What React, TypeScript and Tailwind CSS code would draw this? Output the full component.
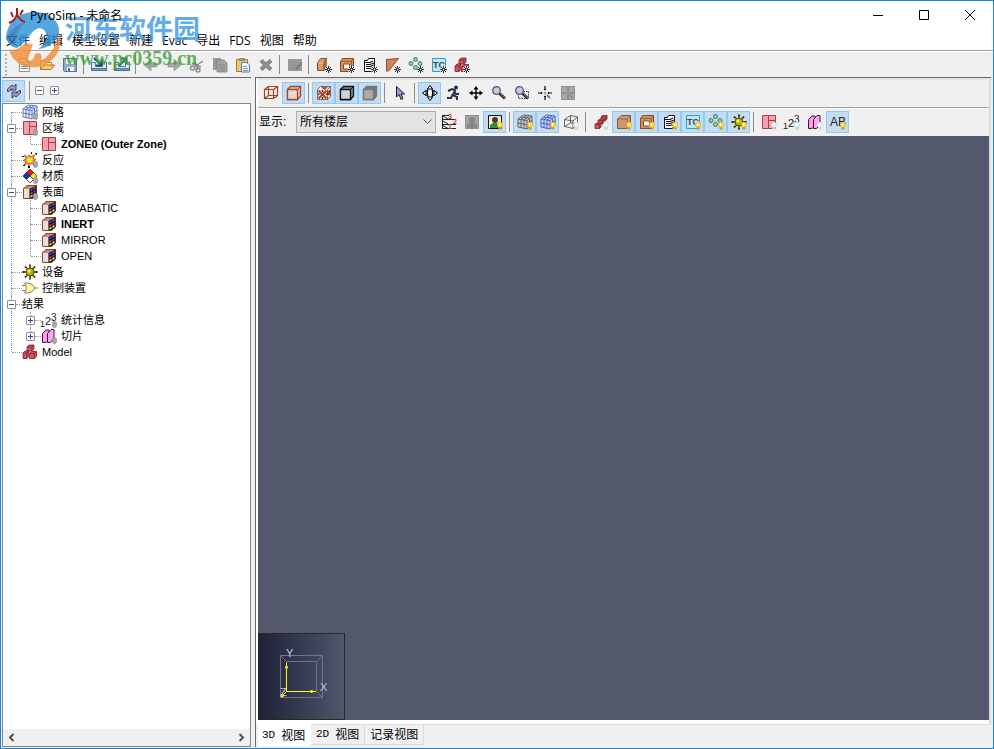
import React from "react";

type Overlay = "new" | "on" | "off" | "dim";

function Mark({ kind }: { kind: Overlay }) {
  if (kind === "new")
    return (
      <g>
        <circle cx="12.500" cy="12.500" r="3.500" fill="#f4f4f4" />
        <path
          d="M12.500 9v7M9 12.500h7M10 10l5 5M15 10l-5 5"
          stroke="#111"
          strokeWidth="0.900"
        />
        <rect x="11.800" y="11.800" width="1.400" height="1.400" fill="#fff" />
      </g>
    );
  if (kind === "dim")
    return <rect x="11.500" y="9.500" width="4" height="6" rx="1.800" fill="#a8a8a8" stroke="#8c8c8c" strokeWidth="0.700" />;
  const fill = kind === "on" ? "#ffd83a" : "#e6f5fd";
  const line = kind === "on" ? "#e0a52a" : "#a9cfe0";
  return (
    <g>
      <path d="M11.500 12h3v3.500h-3z" fill={kind === "on" ? "#c99b2e" : "#bcd8e6"} />
      <circle cx="13" cy="10.800" r="2.700" fill={fill} stroke={line} strokeWidth="0.500" />
      <path d="M12 9.500h1.200v2H12z" fill="#fff" />
    </g>
  );
}

function Ic({ children, mark, crisp }: { children?: React.ReactNode; mark?: Overlay; crisp?: boolean }) {
  return (
    <svg
      width="16"
      height="16"
      viewBox="0 0 16 16"
      fill="none"
      aria-hidden="true"
      className="block shrink-0 overflow-visible"
      shapeRendering={crisp ? "crispEdges" : "auto"}
    >
      {children}
      {mark && <Mark kind={mark} />}
    </svg>
  );
}

const FileIcon = () => (
  <Ic>
    <path d="M3.500 1.500h7l3 3v10h-10z" fill="#fffef8" stroke="#a08c5a" />
    <path d="M10.500 1.500v3h3" stroke="#a08c5a" />
    <path d="M5 5.500h4M5 7.500h7M5 9.500h7M5 11.500h7" stroke="#5b84b5" />
  </Ic>
);
const FolderIcon = () => (
  <Ic>
    <path d="M1.500 12.500v-9h4l1 2h6v3" fill="#fdf3cf" stroke="#b0802e" />
    <path d="M1.500 12.500l3-4.500h11l-3.500 4.500z" fill="#f7c86c" stroke="#b0741e" />
  </Ic>
);
const SaveIcon = () => (
  <Ic>
    <path d="M1.500 1.500h13v13h-12l-1-1z" fill="#8fa9cb" stroke="#587196" />
    <path d="M4 2h8v5H4z" fill="#e7f1e5" />
    <path d="M5 10h7v4H5z" fill="#f6f6f6" />
    <path d="M6 11h2v3H6z" fill="#587196" />
  </Ic>
);
const TrayIcon = ({ out }: { out?: boolean }) => (
  <Ic>
    <path d="M0.500 5.500h4v4h7v-4h4v8h-15z" fill="#dce8f4" stroke="#4d7394" />
    <path d="M0.500 11.500h15v2h-15z" fill="#7f9fba" stroke="#4d7394" />
    {out ? (
      <path d="M5 9l7-7M7 1.500h5.500V7" stroke="#2b7568" strokeWidth="2" />
    ) : (
      <path d="M3 1l7 7M10.500 2.500v6H5" stroke="#244d7d" strokeWidth="2" />
    )}
  </Ic>
);
const ArrowIcon = ({ right }: { right?: boolean }) => (
  <Ic>
    {right ? (
      <path d="M2 6h6V2l7 6-7 6v-4H2z" fill="#a6a6a6" stroke="#8e8e8e" strokeWidth="0.600" />
    ) : (
      <path d="M14 6H8V2L1 8l7 6v-4h6z" fill="#a6a6a6" stroke="#8e8e8e" strokeWidth="0.600" />
    )}
  </Ic>
);
const CutIcon = () => (
  <Ic>
    <path d="M5 10L14 4M6 5l3 8M3 6l9 4" stroke="#8b8b8b" strokeWidth="1.500" />
    <circle cx="3.500" cy="11" r="2" stroke="#8b8b8b" strokeWidth="1.500" />
    <circle cx="9" cy="13" r="2" stroke="#8b8b8b" strokeWidth="1.500" />
  </Ic>
);
const CopyIcon = () => (
  <Ic>
    <path d="M1 1h8v12H1z" fill="#999" />
    <path d="M5 3h7l3 3v9H5z" fill="#a2a2a2" stroke="#7f7f7f" strokeWidth="0.800" />
    <path d="M7 7.500h6M7 9.500h6M7 11.500h6M7 13.500h6M2 4.500h2M2 6.500h2M2 8.500h2" stroke="#858585" strokeWidth="0.600" />
  </Ic>
);
const PasteIcon = () => (
  <Ic>
    <path d="M1.500 2.500h11v12h-11z" fill="#efc66d" stroke="#a97b2c" />
    <path d="M4 1h6v3H4z" fill="#8f8f8f" />
    <path d="M6.500 5.500h5l3 2.500v7h-8z" fill="#f3f8ff" stroke="#5b79a8" />
    <path d="M8 9.500h4M8 11.500h5M8 13.500h5" stroke="#5b79a8" strokeWidth="0.800" />
  </Ic>
);
const DeleteIcon = () => (
  <Ic>
    <path d="M3 3.500l10 9M13 3.500l-10 9" stroke="#7e7e7e" strokeWidth="4" />
    <path d="M3.500 4l9 8M12.500 4l-9 8" stroke="#929292" strokeWidth="2" />
  </Ic>
);
const TableIcon = () => (
  <Ic>
    <path d="M1 2h14v12H1z" fill="#9b9b9b" />
    <path d="M1 5.500h14M1 8.500h14M1 11.500h14M5.500 3v11" stroke="#8d8d8d" strokeWidth="0.700" />
    <path d="M14.500 6l-6 7" stroke="#777" strokeWidth="1.600" />
  </Ic>
);

const Slab = () => (
  <g>
    <path d="M1.500 6l3-4.500h6l-2.500 4v8H1.500z" fill="#dc9a6c" stroke="#8a4a22" />
    <path d="M10.500 1.500v9L8 13.500V5.500z" fill="#b06a3c" stroke="#8a4a22" strokeWidth="0.500" />
    <path d="M2.500 6h5" stroke="#f0bd97" />
  </g>
);
const Hole = () => (
  <g>
    <path d="M1.500 4.500l2-3h11v10l-2 3h-11z" fill="#d4905f" stroke="#8a4a22" />
    <path d="M1.500 4.500h11v10M12.500 4.500l2-3" stroke="#8a4a22" strokeWidth="0.700" />
    <path d="M4.500 7h6v5h-6z" fill="#fff" stroke="#8a4a22" />
  </g>
);
const Vent = () => (
  <g>
    <path d="M2.500 3.500h3l1-2h6v10l-2 3h-8z" fill="#fff" stroke="#111" />
    <path d="M3 5.500h5l3-1.500M4 7.500h4l4-1.500M4 9.500h4l4-1.500M4 11.500h4l4-1.500" stroke="#111" strokeWidth="1.100" />
  </g>
);
const Particles = () => (
  <g fill="#9ccca7" stroke="#3c7f5a">
    <circle cx="7.500" cy="2.500" r="2" />
    <circle cx="3" cy="6.500" r="2" />
    <circle cx="7.500" cy="10.500" r="2" />
    <circle cx="12" cy="6.500" r="2" />
  </g>
);
const Thermo = () => (
  <g>
    <path d="M1.500 1.500h13v13h-13z" fill="#bfe5f7" stroke="#2aa0cf" />
    <text x="2" y="11" fontSize="9" fontWeight="bold" fill="#444" className="font-['Liberation_Sans',sans-serif]">TC</text>
  </g>
);
const Blocks = ({ small }: { small?: boolean }) =>
  small ? (
    <g fill="#c9555c" stroke="#861c26" strokeWidth="0.800" strokeLinejoin="round">
      <path d="M8 3l1.500-1.500H14V5l-1.500 1.500H8zM8 3h4.500v3.500M12.500 3L14 1.500" />
      <path d="M5 6.500L6.500 5H11v3.500L9.500 10H5zM5 6.500h4.500V10M9.500 6.500L11 5" />
      <path d="M2 10.500L3.500 9H8v4l-1.500 1.500H2zM2 10.500h4.500v4M6.500 10.500L8 9" />
    </g>
  ) : (
    <g fill="#cb5a62" stroke="#861c26" strokeWidth="0.800" strokeLinejoin="round">
      <path d="M5 3l2-2h5v4l-2 2H5zM5 3h5v4M10 3l2-2" />
      <path d="M1 9l2-2h4v5l-2 2.500H1zM1 9h4v5.500M5 9l2-2" />
      <path d="M7.500 9.500l2-2h5v5l-2 2h-5zM7.500 9.500h5v5M12.500 9.500l2-2" />
    </g>
  );
const Sun = () => (
  <g>
    <path
      d="M8 0.500v15M0.500 8h15M3 2.500l10 11M13 2.500L3 13.500"
      stroke="#2c2b00"
      strokeWidth="1.800"
    />
    <path d="M8 2v12M2 8h12M4 4l8 8M12 4l-8 8" stroke="#b4b01c" strokeWidth="0.800" />
    <circle cx="8" cy="8" r="4" fill="#b2af14" stroke="#3b3900" strokeWidth="0.800" />
    <circle cx="7" cy="7" r="1.800" fill="#eeeb5a" />
  </g>
);
const GridCube = ({ color = "#5468b8", fill = "#eef2fd" }: { color?: string; fill?: string }) => (
  <g stroke={color} strokeWidth="0.900">
    <path d="M1 5l5.500-4 8.500 1v8.500l-5 4.500-9-2z" fill={fill} />
    <path d="M1 5l9 1.500L15 2M10 6.500V15M1 9l9 1.700 5-4.500M4 5.500v8.200M7 6v8.500M3.700 3l9 1.200M4 5.500L9.500 1.400M7 6l5-4.300M12.500 4.500v8.300" />
  </g>
);
const Zone = ({ mark }: { mark?: Overlay }) => (
  <Ic mark={mark}>
    <path d="M1.500 1.500h13v13h-13z" fill="#f99fa8" stroke="#a5404c" />
    <path d="M7.500 1.500v13M7.500 6.500h7" stroke="#a5404c" />
  </Ic>
);
const Nums = ({ mark }: { mark?: Overlay }) => (
  <Ic mark={mark}>
    <g fill="#222" className="font-['Liberation_Sans',sans-serif]">
      <text x="-1" y="15" fontSize="9">1</text>
      <text x="4" y="13" fontSize="11">2</text>
      <text x="10" y="9" fontSize="10">3</text>
    </g>
  </Ic>
);
const Slice = ({ mark }: { mark?: Overlay }) => (
  <Ic mark={mark}>
    <path d="M1.500 5.500L5 2h3v9l-3 3.500H1.500z" fill="#f5a0e8" stroke="#4c103f" />
    <path d="M6.500 5.500L10 1.500h3v9l-3.500 4h-3z" fill="#f8a8ed" stroke="#4c103f" />
  </Ic>
);
const WireCube = () => (
  <Ic>
    <path d="M1.500 4.500h9v9h-9zM5.500 1.500h9v9h-9zM1.500 4.500l4-3M10.500 4.500l4-3M1.500 13.500l4-3M10.500 13.500l4-3" stroke="#a8401f" strokeWidth="1.200" />
  </Ic>
);
const SolidCube = ({ line, face, top }: { line: string; face: string; top: string }) => (
  <Ic>
    <path d="M1.500 4.500l3-3h10v9.500l-3 3.500h-10z" fill={top} stroke={line} strokeWidth="1.300" />
    <path d="M1.500 4.500h10v10h-10z" fill={face} stroke={line} strokeWidth="1.300" />
    <path d="M11.500 4.500l3-3" stroke={line} />
  </Ic>
);
const TexCube = () => (
  <Ic>
    <path d="M1.500 4.500l3-3h10v9.500l-3 3.500h-10z" fill="#f3ebe8" stroke="#5a3a30" strokeWidth="0.700" />
    <path d="M2.500 5.500l8 8M10.500 5.500l-8 8M6 2l3 2M11 2L8 4M12 6l2 4M14 5l-2 5" stroke="#b43b22" strokeWidth="1.900" />
    <path d="M1.500 9h2M9.500 9h2M6.500 5v2M6.500 12v2" stroke="#333" strokeWidth="1.500" />
    <path d="M11.500 4.500v10M11.500 4.500l3-3" stroke="#4a2a20" strokeWidth="0.700" />
  </Ic>
);
const Cursor = () => (
  <Ic>
    <path d="M4.500 1.500v10.500l2.500-2.500 2 5 2-1-2-4.500h3.500z" fill="#97a0ce" stroke="#16162e" />
  </Ic>
);
const Orbit = () => (
  <Ic>
    <ellipse cx="8" cy="8" rx="6" ry="2.500" stroke="#000" strokeWidth="1.200" />
    <ellipse cx="8" cy="8" rx="2.500" ry="6" fill="#fff" stroke="#000" strokeWidth="1.200" />
    <path d="M5.500 4L8 0.500 10.500 4zM5.500 12L8 15.500l2.500-3.500zM4 5.500L0.500 8 4 10.500zM12 5.500L15.500 8 12 10.500z" fill="#fff" stroke="#000" />
    <path d="M6 7h4v2H6z" fill="#fff" />
  </Ic>
);
const Runner = () => (
  <Ic>
    <circle cx="11" cy="2.500" r="2" fill="#26324a" />
    <path d="M3 6l4-2 3 1-2 5 4 2v3M8 9l-2 4H2M9 6l2 3h3" stroke="#26324a" strokeWidth="2" />
  </Ic>
);
const Move = () => (
  <Ic>
    <path d="M8 3v10M3 8h10" stroke="#000" strokeWidth="1.400" />
    <path d="M8 1l2.500 3.500h-5zM8 15l2.500-3.500h-5zM1 8l3.500-2.500v5zM15 8l-3.500-2.500v5z" fill="#000" />
  </Ic>
);
const Lens = ({ box }: { box?: boolean }) => (
  <Ic>
    {box && <path d="M4.500 6.500h10v7h-10z" stroke="#1e3184" strokeDasharray="1.500 1" />}
    <path d="M8.500 8.500l5.500 5" stroke="#2a2030" strokeWidth="3" />
    <path d="M9.500 9l4.500 4" stroke="#bd7b66" strokeWidth="1" />
    <circle cx="5.500" cy="5.500" r="3.800" fill="#c7cbea" stroke="#55566c" strokeWidth="1.300" />
  </Ic>
);
const Center = () => (
  <Ic>
    <path d="M8 1v4M8 11v4M1 8h4M11 8h4" stroke="#000" strokeWidth="1.200" />
    <path d="M8 5.500L6.500 4h3zM8 10.500L6.500 12h3zM5.500 8L4 6.500v3zM10.500 8L12 6.500v3z" fill="#111" />
    <circle cx="8" cy="8" r="1.500" fill="#9aa5dd" />
    <path d="M10 10l3 3" stroke="#8c4a3a" strokeWidth="1.500" />
  </Ic>
);
const GrayCenter = () => (
  <Ic>
    <path d="M1.500 1.500h13v13h-13z" fill="#a8a8a8" stroke="#8f8f8f" />
    <path d="M8 2v4M8 10v4M2 8h4M10 8h4M10 10l3 3" stroke="#777" strokeWidth="1.200" />
    <circle cx="8" cy="8" r="1.500" fill="#888" />
  </Ic>
);
const Floors = () => (
  <Ic>
    <path d="M1.500 1v14M1 5.500h14M1 10.500h14M1 14.500h14M2 2l5 3M2 7l5 3M2 11.500l5 3M2 1.500h6" stroke="#222" />
    <g fill="#d0361e" fontSize="7" fontWeight="bold" className="font-['Liberation_Sans',sans-serif]">
      <text x="7" y="5">3</text>
      <text x="12" y="10">2</text>
      <text x="7" y="15">1</text>
    </g>
  </Ic>
);
const Person = ({ gray }: { gray?: boolean }) => (
  <Ic mark={gray ? undefined : "on"}>
    <path d="M1.500 1.500h13v13h-13z" fill={gray ? "#a5a5a5" : "#fff6be"} stroke={gray ? "#8f8f8f" : "#111"} />
    {!gray && <path d="M2 2h12v3H2z" fill="#c9edf6" />}
    <path d="M3 14v-3l3-2h4l3 2v3z" fill={gray ? "#858585" : "#2d8f3e"} />
    <circle cx="8" cy="6" r="3" fill={gray ? "#858585" : "#5c3526"} />
  </Ic>
);
const Refresh = () => (
  <Ic>
    <path d="M1.500 8.500V6L6 2l2 1.500L10 1v6H4.500L6 5.500 3 8.500z" fill="#9da0cc" stroke="#24253c" strokeWidth="0.800" />
    <path d="M14.500 7.500V10L10 14l-2-1.500L6 15V9h5.500L10 10.500l3-3z" fill="#9da0cc" stroke="#24253c" strokeWidth="0.800" />
  </Ic>
);
const Burst = () => (
  <Ic mark="dim">
    <path d="M2.500 3l3 2.500L7 3l1.500 2 4-2-1.500 3.500 3 1-3 2 2 4-4-2-2 2.500-1-3-4 2.500 2-4-3-1 3-1.500z" fill="#f6b52e" stroke="#b0330f" strokeWidth="0.800" />
    <path d="M5.500 6l4 4M10 6l-4 4" stroke="#fff06a" strokeWidth="1.300" />
    <path d="M0 4h2v1H0zM2 1l2 2M13 1h2v2h-1zM9 0h1v2H9zM1 13h2v1H1zM6 14h2v2H6z" fill="#111" />
  </Ic>
);
const Diamond = () => (
  <Ic mark="dim">
    <path d="M8 1l3.500 3.500L8 8 4.500 4.500z" fill="#ea1b1b" />
    <path d="M4.500 4.500L8 8l-3.500 3.500L1 8z" fill="#1a2fd0" />
    <path d="M11.500 4.500L15 8l-3.500 3.500L8 8z" fill="#f6e52b" />
    <path d="M8 8l3.500 3.500L8 15l-3.500-3.500z" fill="#fff" />
    <path d="M8 1l7 7-7 7-7-7zM4.500 4.500l7 7M11.500 4.500l-7 7" stroke="#111" strokeWidth="0.700" />
  </Ic>
);
const Surface = ({ mark }: { mark?: Overlay }) => (
  <Ic mark={mark}>
    <path d="M1.500 4.500L5 1.500h9.500v9.500l-4 3.500h-9z" fill="#c98a6c" stroke="#7a3a20" strokeWidth="0.900" />
    <path d="M2 5h5.500v9H2z" fill="#e2e0df" />
    <path d="M7.500 5L14.500 1.500v9.500l-4 3.500h-3z" fill="#16162a" />
    <path d="M8.500 5.500l2-1v2l-2 1zM11.500 7l2-1v2l-2 1z" fill="#2b4be0" />
    <path d="M11.500 3.800l2-1v2l-2 1zM8.500 8.700l2-1v2l-2 1z" fill="#e0392c" />
    <path d="M8.500 11.800l2-1v2l-2 1zM11.500 10l2-1v2l-2 1z" fill="#f5dc30" />
  </Ic>
);
const Gate = () => (
  <Ic>
    <path d="M0 5.500h4M0 10.500h4M13 8h3" stroke="#777" />
    <path d="M2.500 3h4q5 1 6.500 5-1.500 4-6.500 5h-4q3.500-5 0-10z" fill="#fdf6a2" stroke="#8c8645" />
  </Ic>
);

function Tool({ label, on, children }: { label: string; on?: boolean; children: React.ReactNode }) {
  return (
    <button
      type="button"
      title={label}
      aria-label={label}
      className={
        "flex h-[22px] w-[23px] shrink-0 items-center justify-center border " +
        (on ? "border-[#90c8f6] bg-[#c3dcf1]" : "border-transparent hover:bg-[#dcebf8]")
      }
    >
      {children}
    </button>
  );
}
const Sep = () => <span className="mx-[3px] h-5 w-px shrink-0 bg-[#8c8c8c]" />;
const MainSep = () => <span className="ml-[2px] mr-[3px] h-[19px] w-px shrink-0 bg-[#8c8c8c]" />;

function Expander({ open }: { open: boolean }) {
  return (
    <button
      type="button"
      aria-label={open ? "折叠" : "展开"}
      className="flex h-[9px] w-[9px] shrink-0 items-center justify-center rounded-[1px] border border-[#919191] bg-white"
    >
      <svg width="5" height="5" viewBox="0 0 5 5" shapeRendering="crispEdges" aria-hidden="true">
        <path d={open ? "M0 2h5v1H0z" : "M0 2h5v1H0zM2 0h1v5H2z"} fill="#304c9c" />
      </svg>
    </button>
  );
}

type Node = {
  name: string;
  icon?: React.ReactNode;
  bold?: boolean;
  open?: boolean;
  children?: Node[];
};

const TREE: Node[] = [
  { name: "网格", icon: <Ic mark="dim"><GridCube /></Ic> },
  { name: "区域", icon: <Zone mark="dim" />, open: true, children: [{ name: "ZONE0 (Outer Zone)", icon: <Zone />, bold: true }] },
  { name: "反应", icon: <Burst /> },
  { name: "材质", icon: <Diamond /> },
  {
    name: "表面",
    icon: <Surface mark="dim" />,
    open: true,
    children: [
      { name: "ADIABATIC", icon: <Surface /> },
      { name: "INERT", icon: <Surface />, bold: true },
      { name: "MIRROR", icon: <Surface /> },
      { name: "OPEN", icon: <Surface /> },
    ],
  },
  { name: "设备", icon: <Ic><Sun /></Ic> },
  { name: "控制装置", icon: <Gate /> },
  {
    name: "结果",
    open: true,
    children: [
      { name: "统计信息", icon: <Nums mark="dim" />, open: false },
      { name: "切片", icon: <Slice mark="dim" />, open: false },
    ],
  },
  { name: "Model", icon: <Ic><Blocks /></Ic> },
];

function Branch({ nodes, root }: { nodes: Node[]; root?: boolean }) {
  return (
    <ul>
      {nodes.map((n, i) => {
        const last = i === nodes.length - 1;
        const first = root && i === 0;
        return (
          <li key={n.name} className="grid grid-cols-[15px_1fr]">
            <div className="flex h-4 items-center">
              <span className="flex w-[9px] flex-col items-center self-stretch">
                <span className={"w-0 flex-1 border-l border-dotted " + (first ? "border-transparent" : "border-[#999]")} />
                {n.open !== undefined && <Expander open={n.open} />}
                <span className={"w-0 flex-1 border-l border-dotted " + (last ? "border-transparent" : "border-[#999]")} />
              </span>
              <span className={"h-0 flex-1 border-t border-dotted border-[#999] " + (n.open === undefined ? "-ml-1" : "")} />
            </div>
            <div className="flex h-4 items-center gap-1 whitespace-nowrap">
              {n.icon}
              <span className={n.bold ? "font-bold" : ""}>{n.name}</span>
            </div>
            {n.children && (
              <>
                <div className="flex w-[9px] justify-center">
                  <span className={"w-0 border-l border-dotted " + (last ? "border-transparent" : "border-[#999]")} />
                </div>
                <div className="pl-1">
                  <Branch nodes={n.children} />
                </div>
              </>
            )}
          </li>
        );
      })}
    </ul>
  );
}

function Watermark() {
  return (
    <div className="pointer-events-none absolute left-1 top-2 flex items-start opacity-80">
      <svg width="60" height="60" viewBox="0 0 60 60" aria-hidden="true">
        <path d="M1 28C3 12 14 3 30 3c13 0 22 7 24 16 1 11-8 20-21 21 6-4 10-10 8-16-2-5-7-6-11-3-6 4-9 13-18 18-6-1-10-5-11-11z" fill="#2991d8" />
        <path d="M1 30c3-8 10-14 19-17-6 6-8 12-9 21-4 1-8-1-10-4z" fill="#2070b0" />
        <path d="M4 40c6 2 11-1 16-6l8 1-6 18c5-1 7-3 8-8 5-2 8 0 6 7 8-5 14-13 16-22 3-2 3-4 3-6 3 16-6 31-22 34C17 60 7 52 4 40z" fill="#f38b35" />
      </svg>
      <div className="flex flex-col pt-[7px]">
        <span className="text-[27px] font-bold leading-7 text-[#3b9be9]">河东软件园</span>
        <span className="font-['Liberation_Serif',serif] text-[20px] font-bold leading-7 text-[#3da13b]">www.pc0359.cn</span>
      </div>
    </div>
  );
}

const MENU = ["文件", "编辑", "模型设置", "新建", "Evac", "导出", "FDS", "视图", "帮助"];

export default function App() {
  return (
    <div className="relative flex h-screen flex-col overflow-hidden border border-[#1883d7] bg-[#f0f0f0] font-['Liberation_Sans','Noto_Sans_CJK_SC',sans-serif] text-xs text-black">
      <header className="flex h-[29px] shrink-0 items-center justify-between bg-white pl-[7px] font-['Noto_Sans','Noto_Sans_CJK_SC',sans-serif]">
        <div className="z-10 flex items-center gap-1">
          <svg width="18" height="16" viewBox="0 0 18 16" fill="none" stroke="#a51d20" strokeWidth="2" aria-hidden="true">
            <path d="M9 0v6q-1 6-8 9M9 6q2 6 8 8M3 4l2 5M15 2l-3 5" />
          </svg>
          <h1 className="text-xs">PyroSim - 未命名</h1>
        </div>
        <div className="flex self-start">
          {["M3 8.500h10", "M3.500 3.500h9v9h-9z", "M3 3l10 10M13 3L3 13"].map((d, i) => (
            <button key={d} type="button" aria-label={["最小化", "最大化", "关闭"][i]} className="flex h-[27px] w-[46px] items-center justify-center">
              <svg width="16" height="16" viewBox="0 0 16 16" fill="none" stroke="#000" aria-hidden="true"><path d={d} /></svg>
            </button>
          ))}
        </div>
      </header>
      <nav className="flex h-[21px] shrink-0 items-center gap-[9px] border-b border-[#a0a0a0] bg-white pl-[5px] pt-[2px] font-['Open_Sans','Noto_Sans_CJK_SC',sans-serif]">
        {MENU.map((m) => (
          <button key={m} type="button" className="whitespace-nowrap">{m}</button>
        ))}
      </nav>

      <div className="flex h-[26px] shrink-0 items-center border-t border-white pl-1">
        <span className="mr-[5px] h-[22px] w-0 border-l-2 border-dotted border-[#b4b4b4]" />
        <Tool label="新建"><FileIcon /></Tool>
        <Tool label="打开"><FolderIcon /></Tool>
        <Tool label="保存"><SaveIcon /></Tool>
        <MainSep />
        <Tool label="导入"><TrayIcon /></Tool>
        <Tool label="导出"><TrayIcon out /></Tool>
        <MainSep />
        <Tool label="撤销"><ArrowIcon /></Tool>
        <Tool label="重做"><ArrowIcon right /></Tool>
        <Tool label="剪切"><CutIcon /></Tool>
        <Tool label="复制"><CopyIcon /></Tool>
        <Tool label="粘贴"><PasteIcon /></Tool>
        <Tool label="删除"><DeleteIcon /></Tool>
        <MainSep />
        <Tool label="编辑"><TableIcon /></Tool>
        <MainSep />
        <Tool label="新建障碍物"><Ic mark="new"><Slab /></Ic></Tool>
        <Tool label="新建孔洞"><Ic mark="new"><Hole /></Ic></Tool>
        <Tool label="新建通风口"><Ic mark="new"><Vent /></Ic></Tool>
        <Tool label="新建斜面"><Ic mark="new"><path d="M1.500 2.500l12-1-10 12.500h-2z" fill="#cf8453" stroke="#8a4a22" /></Ic></Tool>
        <Tool label="新建粒子"><Ic mark="new"><Particles /></Ic></Tool>
        <Tool label="新建热电偶"><Ic mark="new"><Thermo /></Ic></Tool>
        <Tool label="新建组"><Ic mark="new"><Blocks /></Ic></Tool>
      </div>

      <div className="flex min-h-0 flex-1 gap-1 pb-px pl-px pr-[2px]">
        <aside className="flex w-[249px] shrink-0 flex-col border-t border-[#696969]">
          <div className="flex h-[25px] shrink-0 items-center">
            <Tool label="同步选择" on><Refresh /></Tool>
            <span className="ml-1 mr-[5px] h-[19px] w-px bg-[#8c8c8c]" />
            <div className="flex gap-[6px]">
              <Expander open />
              <Expander open={false} />
            </div>
          </div>
          <div className="flex min-h-0 flex-1 flex-col border border-[#828790] bg-white">
            <div className="min-h-0 flex-1 overflow-hidden pl-1 text-[11px] leading-4">
              <Branch nodes={TREE} root />
            </div>
            <div className="flex h-[17px] shrink-0 items-center justify-between bg-[#f0f0f0] px-[5px]">
              {["M5.500 1L2 4.500 5.500 8", "M1.500 1L5 4.500 1.500 8"].map((d, i) => (
                <button key={d} type="button" aria-label={i ? "向右滚动" : "向左滚动"}>
                  <svg width="7" height="9" viewBox="0 0 7 9" fill="none" stroke="#505050" strokeWidth="2" aria-hidden="true"><path d={d} /></svg>
                </button>
              ))}
            </div>
          </div>
        </aside>

        <main className="flex min-w-0 flex-1 flex-col border-l border-t border-[#696969]">
          <div className="flex min-h-0 flex-1 flex-col border-2 border-b border-[#dcdcdc] border-l-white border-t-[#e3e3e3]">
            <div className="flex h-7 shrink-0 items-center border-b border-[#a0a0a0] pb-px pl-px">
              <Tool label="线框"><WireCube /></Tool>
              <Tool label="轮廓" on><SolidCube line="#a8472a" face="#e9d6d0" top="#d9c5bf" /></Tool>
              <Sep />
              <Tool label="纹理" on><TexCube /></Tool>
              <Tool label="实体轮廓" on><SolidCube line="#111" face="#cdd3d8" top="#888" /></Tool>
              <Tool label="实体" on><SolidCube line="#777" face="#aaa" top="#777" /></Tool>
              <Sep />
              <Tool label="选择"><Cursor /></Tool>
              <Sep />
              <Tool label="旋转" on><Orbit /></Tool>
              <Tool label="漫游"><Runner /></Tool>
              <Tool label="平移"><Move /></Tool>
              <Tool label="缩放"><Lens /></Tool>
              <Tool label="框选缩放"><Lens box /></Tool>
              <Tool label="重置视图"><Center /></Tool>
              <Tool label="重置所选"><GrayCenter /></Tool>
            </div>
            <div className="flex h-7 shrink-0 items-center border-t border-white pb-px pl-px">
              <label htmlFor="floor" className="w-[37px] shrink-0 whitespace-nowrap">显示:</label>
              <div className="relative mr-px w-[140px] shrink-0">
                <select id="floor" className="block h-[22px] w-full appearance-none border border-[#adadad] bg-[#e3e3e3] pl-[3px] text-xs outline-none">
                  <option>所有楼层</option>
                </select>
                <svg className="pointer-events-none absolute right-1 top-[8px]" width="9" height="6" viewBox="0 0 9 6" fill="none" stroke="#555" aria-hidden="true"><path d="M0.500 0.500l4 4 4-4" /></svg>
              </div>
              <Tool label="楼层"><Floors /></Tool>
              <Tool label="背景"><Person gray /></Tool>
              <Tool label="显示背景" on><Person /></Tool>
              <Sep />
              <Tool label="网格轮廓" on><Ic mark="on"><GridCube color="#555" fill="#ccc" /></Ic></Tool>
              <Tool label="网格线" on><Ic mark="on"><GridCube color="#4254bd" fill="#c9d6f6" /></Ic></Tool>
              <Tool label="网格边界"><Ic mark="off"><path d="M1.500 5.500l6-4 7 1.500v7L10 14.500l-8.500-2zM1.500 5.500l8.500 1.500 4.500-4M10 7v7.500M1.500 12.500L7.500 9l7 1M7.500 1.500V9" stroke="#444" strokeWidth="0.800" /></Ic></Tool>
              <Sep />
              <Tool label="组"><Ic mark="off"><Blocks small /></Ic></Tool>
              <Tool label="障碍物" on><Ic mark="on"><path d="M1.500 5l4-3.500h9v9L11 14.500H1.500z" fill="#cf9670" stroke="#8a5632" /><path d="M1.500 5H11v9.500M11 5l3.500-3.500" stroke="#8a5632" strokeWidth="0.700" /></Ic></Tool>
              <Tool label="孔洞" on><Ic mark="on"><Hole /></Ic></Tool>
              <Tool label="通风口" on><Ic mark="on"><Vent /></Ic></Tool>
              <Tool label="热电偶" on><Ic mark="on"><Thermo /></Ic></Tool>
              <Tool label="粒子" on><Ic mark="on"><Particles /></Ic></Tool>
              <Tool label="设备" on><Ic mark="on"><Sun /></Ic></Tool>
              <Sep />
              <Tool label="区域"><Zone mark="off" /></Tool>
              <Tool label="统计信息"><Nums mark="off" /></Tool>
              <Tool label="切片"><Slice mark="off" /></Tool>
              <Tool label="标签" on><Ic mark="on"><text x="0" y="12" fontSize="12" fill="#222" className="font-['Liberation_Sans',sans-serif]">AB</text></Ic></Tool>
            </div>
            <div className="flex min-h-0 flex-1 items-end bg-[#53586c]">
              <div className="h-[87px] w-[87px] border border-[#2b2822] bg-gradient-to-r from-[#1e2338] to-[#50566c]">
                <svg width="85" height="85" viewBox="0 0 85 85" fill="none" aria-label="坐标轴" role="img">
                  <path d="M21.500 21.500h42v42h-42zM27.500 27.500h30v30h-30zM21.500 21.500l6 6M63.500 21.500l-6 6M63.500 63.500l-6-6" stroke="#6f7390" />
                  <path d="M27.500 29v28.500H57M27.500 57.500l-5 5" stroke="#ff0" />
                  <path d="M26.500 34l1-3 1 3zM52 56.500l3 1-3 1zM22 63l1-3 2 2z" fill="#ff0" stroke="#ff0" />
                  <g fill="#c7c9d0" fontSize="11" className="font-['Liberation_Sans',sans-serif]">
                    <text x="27" y="23">Y</text>
                    <text x="61" y="57">X</text>
                    <text x="21" y="62">Z</text>
                  </g>
                </svg>
              </div>
            </div>
            <div className="h-1 shrink-0 bg-white" />
          </div>
          <div className="flex h-[22px] shrink-0 items-start pl-[2px]" role="tablist">
            {["3D", "2D", ""].map((d, i) => (
              <button
                key={d}
                type="button"
                role="tab"
                aria-selected={i === 0}
                className={
                  "flex items-center gap-[6px] whitespace-nowrap " +
                  (i === 0 ? "-mt-px h-[22px] w-[53px] bg-white pl-1 pt-px" : "h-5 border-b border-r border-[#d9d9d9] px-[5px]")
                }
              >
                {d && <span className="font-['Liberation_Mono',monospace] text-[11px]">{d}</span>}
                <span>{d ? "视图" : "记录视图"}</span>
              </button>
            ))}
          </div>
        </main>
      </div>
      <Watermark />
    </div>
  );
}
